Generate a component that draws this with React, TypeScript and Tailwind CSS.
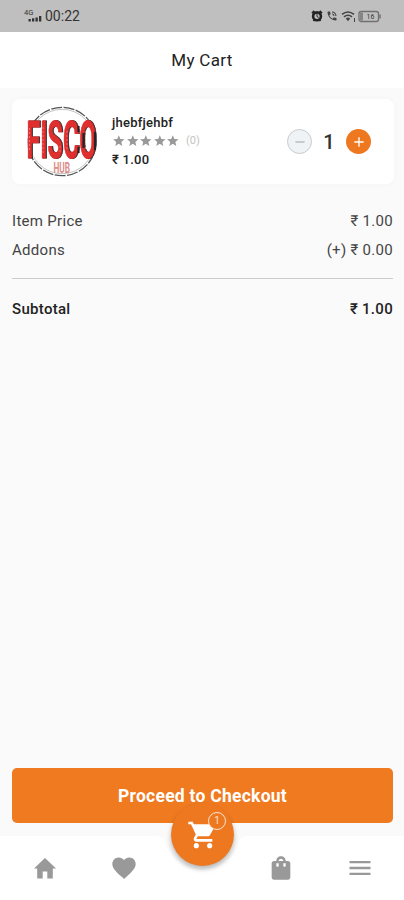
import {
  MdAdd,
  MdFavorite,
  MdMenu,
  MdPhoneInTalk,
  MdRemove,
  MdShoppingBag,
  MdShoppingCart,
  MdStar
} from 'react-icons/md';

interface PriceRowProps {
  label: string;
  value: string;
}

const StatusBar = () => (
  <div className="flex h-8 shrink-0 items-center justify-between bg-[#bfbfbf] pl-6 pr-[22px] text-[#333]">
    <div className="flex items-center">
      <svg width="19" height="16" viewBox="0 0 19 16" fill="currentColor">
        <text x="0" y="6.5" fontSize="7.5" fontFamily="Roboto, sans-serif">
          4G
        </text>
        <rect x="4.5" y="11" width="2.3" height="2.5" />
        <rect x="8" y="10.3" width="2.3" height="3.2" />
        <rect x="11.5" y="9.5" width="2.3" height="4" />
        <rect x="15" y="8" width="2.3" height="5.5" />
      </svg>
      <span className="ml-[2px] text-[14px] leading-4">00:22</span>
    </div>
    <div className="flex items-center">
      <svg width="12" height="12" viewBox="0 0 12 12">
        <circle cx="6" cy="6.3" r="3.9" fill="none" stroke="#222" strokeWidth="2.6" />
        <path d="M1 3.2 3.4 1M11 3.2 8.6 1M2.5 11l1-1.3M9.5 11l-1-1.3" stroke="#222" strokeWidth="1.8" />
        <path d="M6 4v2.6l1.6.8" fill="none" stroke="#222" strokeWidth="1" />
      </svg>
      <MdPhoneInTalk className="ml-[3px]" size={12} color="#444" />
      <svg className="ml-[3px]" width="16" height="13" viewBox="0 0 16 13" fill="none" stroke="#444" strokeWidth="1.7">
        <path d="M1 4.3q6-4.6 12 0M3 6.8q4-3.1 8 0" />
        <path d="M4.8 8.4q2.2-1.6 4.4 0L7 11.2z" fill="#444" stroke="none" />
        <path d="M13.5 8v4" strokeWidth="1" />
      </svg>
      <svg className="ml-[1px]" width="24" height="13" viewBox="0 0 24 13">
        <rect x="1" y="1.5" width="19.5" height="10" rx="2.2" fill="none" stroke="#707070" strokeWidth="1.3" />
        <rect x="2" y="2.5" width="3" height="8" fill="#858585" />
        <path d="M22 4.5v4" stroke="#707070" strokeWidth="1.5" />
        <text x="8.5" y="9" fontSize="7" fill="#333" fontFamily="Roboto, sans-serif">
          16
        </text>
      </svg>
    </div>
  </div>
);

const FiscoLogo = () => (
  <svg className="shrink-0" width="74" height="74" viewBox="0 0 74 74">
    <circle cx="37" cy="36.5" r="34.2" fill="none" stroke="#555" strokeWidth="1.3" strokeDasharray="11 1.5" />
    <circle cx="37" cy="36.5" r="32.2" fill="none" stroke="#b5b5b5" strokeWidth="0.8" />
    <rect x="1" y="16" width="72" height="36" fill="#fff" opacity="0.6" />
    <g className="drop-shadow-[1.5px_0.5px_0_#292326]" transform="translate(1.5 52.5) scale(1 2.15)">
      <text
        x="0"
        y="0"
        fontFamily="Roboto, sans-serif"
        fontWeight="700"
        fontSize="24"
        textLength="70"
        lengthAdjust="spacingAndGlyphs"
        fill="#df2f2e"
        stroke="#df2f2e"
        strokeWidth="0.4"
      >
        FISCO
      </text>
    </g>
    {/* Dark shading on the last two letters */}
    <path d="M53.5 21v6M53.5 42v6M58.5 28v15M70 27v18" stroke="#292326" strokeWidth="2.2" />
    <path d="M4.5 45V22M18 22v26M35 41v7M42 26v19M60.5 26v19" stroke="#f5a09e" strokeWidth="0.6" strokeDasharray="2 2" />
    <g transform="translate(28.5 67.5) scale(1 1.45)">
      <text
        x="0"
        y="0"
        fontFamily="Roboto, sans-serif"
        fontWeight="700"
        fontSize="10.5"
        textLength="16.5"
        lengthAdjust="spacingAndGlyphs"
        fill="#dd8c88"
      >
        HUB
      </text>
    </g>
  </svg>
);

const CartItem = () => (
  <div className="ml-3 mr-[10px] mt-[11px] flex h-[85px] items-center rounded-lg bg-white pl-[13px] pr-[23px] shadow-[0_0_5px_2px_rgba(0,0,0,0.015)]">
    <FiscoLogo />
    <div className="ml-[13px] flex flex-col">
      <span className="text-[13px] font-medium leading-4 tracking-[0.25px] text-[#222]">jhebfjehbf</span>
      <div className="mt-[2px] flex h-4 items-center">
        {[1, 2, 3, 4, 5].map((star) => (
          <MdStar key={star} size={13.6} color="#999" />
        ))}
        <span className="ml-[6px] text-[11px] leading-4 text-[#c4c4c4]">(0)</span>
      </div>
      <span className="mt-[3px] text-[13px] font-medium leading-4 tracking-[0.25px] text-[#222]">₹ 1.00</span>
    </div>
    <div className="ml-auto flex items-center">
      <button
        type="button"
        className="flex h-[25px] w-[25px] items-center justify-center rounded-full border border-[#c9cccd] bg-[#f0f3f5]"
      >
        <MdRemove size={16} color="#b5b8ba" />
      </button>
      <span className="w-[34px] text-center text-[20px] font-medium leading-6 text-[#333]">1</span>
      <button type="button" className="flex h-[25px] w-[25px] items-center justify-center rounded-full bg-[#ee7820]">
        <MdAdd size={16} color="#fff" />
      </button>
    </div>
  </div>
);

const PriceRow = ({ label, value }: PriceRowProps) => (
  <div className="flex h-[29px] items-center justify-between text-[15px] tracking-[0.3px] text-[#444]">
    <span>{label}</span>
    <span>{value}</span>
  </div>
);

const BottomNav = () => (
  <div className="relative h-16 shrink-0">
    <svg className="absolute inset-0" width="404" height="64" viewBox="0 0 404 64">
      <path d="M0 0H156Q163 0 165 5A38 38 0 0 0 239 5Q241 0 248 0H404V64H0z" fill="#fff" />
    </svg>
    <div className="relative flex h-full items-center justify-between pl-[6px] pr-[5px]">
      <button type="button" className="flex w-[78px] justify-center">
        <svg width="22" height="21" viewBox="0 0 22 21" fill="#999">
          <path d="M11 0 0 10.6h3.2v9.9h5.5v-7h4.6v7h5.5v-9.9H22z" />
        </svg>
      </button>
      <button type="button" className="flex w-[78px] justify-center">
        <MdFavorite size={28} color="#999" />
      </button>
      <div className="w-[78px]" />
      <button type="button" className="flex w-[78px] justify-center">
        <MdShoppingBag size={28} color="#999" />
      </button>
      <button type="button" className="flex w-[78px] justify-center">
        <MdMenu size={28} color="#999" />
      </button>
    </div>
    {/* Floating cart button */}
    <button
      type="button"
      className="absolute left-[171px] top-[-33px] flex h-[63px] w-[63px] items-center justify-center rounded-full bg-[#ee7820] shadow-[0_3px_5px_rgba(0,0,0,0.28)]"
    >
      <MdShoppingCart size={32} color="#fff" />
      <span className="absolute left-[37px] top-[9px] flex h-[18px] w-[18px] items-center justify-center rounded-full border border-[#fbe3cf] bg-[#ee7820] text-[10px] leading-none text-[#fbe3cf]">
        1
      </span>
    </button>
  </div>
);

const App = () => {
  return (
    <div className="flex h-[900px] w-[404px] flex-col overflow-hidden bg-[#fafafa] font-[Roboto,sans-serif]">
      <StatusBar />
      <div className="flex h-14 shrink-0 items-center justify-center bg-white pt-px">
        <h1 className="text-[17px] tracking-[0.3px] text-[#222]">My Cart</h1>
      </div>

      <div className="flex-1">
        <CartItem />
        <div className="ml-3 mr-[11px] mt-[23px]">
          <PriceRow label="Item Price" value="₹ 1.00" />
          <PriceRow label="Addons" value="(+) ₹ 0.00" />
          <div className="mt-[13px] h-px bg-[#ccc]" />
          <div className="mt-[19px] flex items-center justify-between text-[15px] font-medium leading-[22px] tracking-[0.3px] text-[#222]">
            <span>Subtotal</span>
            <span>₹ 1.00</span>
          </div>
        </div>
      </div>

      <button
        type="button"
        className="mb-[13px] ml-3 mr-[11px] h-[55px] shrink-0 rounded-[5px] bg-[#ef7a20] pt-px text-[17.5px] font-bold tracking-[0.25px] text-white"
      >
        Proceed to Checkout
      </button>
      <BottomNav />
    </div>
  );
};

export default App;
